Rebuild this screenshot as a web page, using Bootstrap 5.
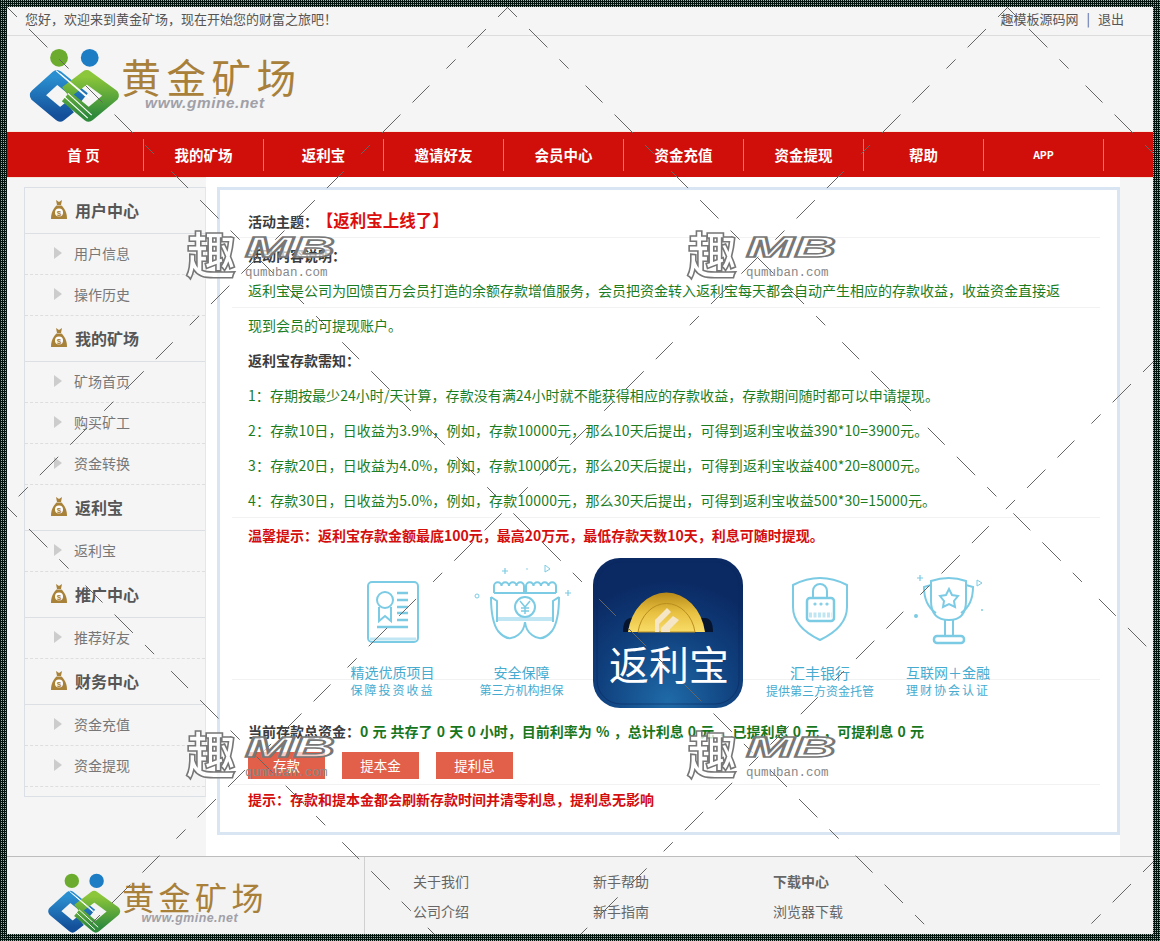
<!DOCTYPE html>
<html lang="zh-CN">
<head>
  <meta charset="UTF-8">
  <meta name="viewport" content="width=device-width, initial-scale=1">
  <title>黄金矿场</title>
  <link href="https://cdn.jsdelivr.net/npm/bootstrap@5.3.3/dist/css/bootstrap.min.css" rel="stylesheet">
  <style>
    body {
      margin: 0;
      font-family: "Noto Sans CJK SC", "Liberation Sans", sans-serif;
      font-size: 14px;
      background: #f5f5f5;
    }
    .frame {
      width: 1160px;
      height: 941px;
      padding: 7px;
      background: conic-gradient(#74c8a4 25%, #04140e 0) 0 0 / 2px 2px;
    }
    .frame-in {
      position: relative;
      height: 927px;
      overflow: hidden;
      background: #f5f5f5;
    }
    .overlay {
      position: absolute;
      left: 0;
      top: 0;
      pointer-events: none;
    }
    .top-bar {
      height: 29px;
      padding: 0 29px 0 18px;
      border-bottom: 1px solid #dcdcdc;
      font-size: 13px;
      line-height: 24px;
      color: #555;
    }
    .top-sep { margin: 0 8px; }
    .logo-area { height: 96px; padding: 1px 0 0 10px; }
    .main-nav {
      height: 45px;
      padding: 7px 0 6px 17px;
      background: #d00f0a;
      box-shadow: 0 -1px 0 #f8eadc, 0 1px 0 #f8e4d4;
    }
    .main-nav a {
      width: 120px;
      height: 32px;
      border-right: 1px solid #f0774a;
      color: #fff;
      font-weight: 700;
      font-size: 14.5px;
      line-height: 32px;
      text-align: center;
      text-decoration: none;
    }
    .main-nav a.small-txt { font-size: 10.5px; }
    .body-wrap { height: 679px; }
    .side-menu {
      width: 182px;
      height: 610px;
      margin: 10px 0 0 17px;
      border: 1px solid #dbdfe6;
      border-right-color: #e6e6e6;
      flex: none;
    }
    .side-head {
      height: 46px;
      padding: 0 0 2px 25px;
      border-bottom: 1px solid #dcdfe4;
      color: #565656;
      font-size: 16px;
      font-weight: 700;
      gap: 7px;
    }
    .side-item {
      height: 41px;
      padding: 0 0 2px 29px;
      border-bottom: 1px dashed #dedede;
      color: #777;
      font-size: 14px;
      gap: 12px;
    }
    .tri {
      width: 0;
      height: 0;
      border-left: 8px solid #ccc;
      border-top: 6px solid transparent;
      border-bottom: 6px solid transparent;
    }
    .main-col {
      width: 914px;
      flex: none;
      padding: 10px 0 21px 11px;
      background: #fff;
    }
    .act-panel {
      height: 648px;
      padding: 13px 17px 0 12px;
      border: 3px solid #d9e5f3;
      background: #fff;
    }
    .act-row {
      height: 35px;
      padding-left: 16px;
      line-height: 34px;
      white-space: nowrap;
    }
    .act-row.ruled { border-bottom: 1px solid #f2f2f2; }
    .act-row.wide-nums { letter-spacing: .17px; }
    .act-row.wide-first { letter-spacing: .05px; }
    .act-row.tip-last { line-height: 28px; }
    .lbl { color: #3c3c3c; font-weight: 700; }
    .colon-c { font-family: "Noto Sans CJK TC", sans-serif; }
    .grn { color: #1b7d1f; }
    .red-tip { color: #d40d0d; font-weight: 700; }
    .act-title { margin-left: 7px; color: #dc0f0f; font-size: 16.5px; font-weight: 700; }
    .grn-b { color: #18761c; font-weight: 700; word-spacing: 1px; }
    .promo {
      height: 161px;
      padding-left: 96px;
      background: linear-gradient(#f2f2f2, #f2f2f2) 0 126px / 100% 1px no-repeat;
    }
    .promo-col { padding-top: 12px; text-align: center; color: #47abd0; line-height: 17px; font-size: 14px; white-space: nowrap; }
    .promo-col svg { display: block; margin: 0 auto 19px; }
    .pc-a { width: 129px; }
    .pc-b { width: 129px; margin-right: 7px; }
    .pc-d { width: 154px; }
    .pc-e { width: 102px; }
    .app-icon { width: 150px; margin-top: 5px; flex: none; }
    .cap-sm { font-size: 12px; }
    .cap-lg { font-size: 15px; }
    .cap-spaced { font-size: 12px; letter-spacing: 2px; }
    .btn-row { height: 36px; padding: 3px 0 0 16px; gap: 17px; border-bottom: 1px solid #f2f2f2; }
    .btn-coral {
      width: 77px;
      height: 27px;
      padding: 0;
      border: 0;
      border-radius: 0;
      background: #e2604a;
      color: #fff;
      font-size: 13.5px;
      line-height: 27px;
    }
    .site-foot {
      height: 78px;
      border-top: 1px solid #bdbdbd;
      background: #f3f3f3;
    }
    .foot-logo { width: 358px; padding: 7px 0 0 32px; border-right: 1px solid #d0d0d0; flex: none; }
    .foot-links { padding: 13px 0 0 48px; }
    .foot-col { width: 180px; }
    .foot-col div { height: 30px; line-height: 22px; color: #666; font-size: 14px; }
  </style>
</head>
<body>

<svg width="0" height="0" class="position-absolute">
  <defs>
    <linearGradient id="blueG" x1="0" y1="0" x2="0" y2="1"><stop offset="0" stop-color="#2a8fd0"/><stop offset="1" stop-color="#14509a"/></linearGradient>
    <linearGradient id="greenG" x1="0" y1="0" x2="0" y2="1"><stop offset="0" stop-color="#8cc63a"/><stop offset="1" stop-color="#2f8a3c"/></linearGradient>
    <symbol id="gmineLogo" viewBox="0 0 280 96">
      <circle cx="41" cy="21" r="9" fill="#6bab2e"/>
      <circle cx="72" cy="21" r="9" fill="#1c7cc4"/>
      <path d="M66 62 39 40 18 59 42 79 52 71" fill="none" stroke="url(#blueG)" stroke-width="13" stroke-linejoin="round"/>
      <path d="M48 56 69 40 95 59 71 79 48 60" fill="none" stroke="url(#greenG)" stroke-width="13" stroke-linejoin="round"/>
      <path d="M42 37 72 62M38 34 68 60" stroke="#fff" stroke-width="1.2"/>
      <path d="M46 60 70 82M50 57 74 79" stroke="#fff" stroke-width="1.2"/>
      <text x="104" y="57" font-size="40" letter-spacing="5.500" fill="#a8803a" font-family="Noto Sans CJK SC, sans-serif">黄金矿场</text>
      <text x="128" y="72" font-size="15.500" font-weight="700" font-style="italic" letter-spacing=".6" fill="#a0a0a8" font-family="Liberation Sans, sans-serif">www.gmine.net</text>
    </symbol>
    <symbol id="moneyBag" viewBox="0 0 18 21">
      <path d="M6 1 9 3 12 1 11 6H7Z" fill="#a9823a"/>
      <path d="M6.500 6.500H11.500C15 10 17 14 17 20H1C1 14 3 10 6.500 6.500Z" fill="#a9823a"/>
      <circle cx="9" cy="13.500" r="4" fill="#fff"/>
      <text x="9" y="16.500" font-size="8" font-weight="700" text-anchor="middle" fill="#a9823a" font-family="Liberation Sans, sans-serif">$</text>
    </symbol>
    <g id="wmMark">
      <text x="0" y="42" font-size="50" font-weight="700" fill="#fff" fill-opacity=".75" stroke="#777" stroke-width="1.600" font-family="Noto Sans CJK SC, sans-serif">趣</text>
      <text x="59" y="25" font-size="30" font-weight="700" font-style="italic" fill="#fff" fill-opacity=".7" stroke="#777" stroke-width="1.600" textLength="90" lengthAdjust="spacingAndGlyphs" font-family="Liberation Sans, sans-serif">MB</text>
      <text x="59" y="44" font-size="12.500" fill="#888" font-family="Liberation Mono, monospace">qumuban.com</text>
    </g>
  </defs>
</svg>

<div class="frame">
  <div class="frame-in d-flex flex-column">

    <div class="top-bar d-flex justify-content-between">
      <span>您好，欢迎来到黄金矿场，现在开始您的财富之旅吧！</span>
      <span>趣模板源码网<span class="top-sep">|</span>退出</span>
    </div>

    <div class="logo-area">
      <svg width="280" height="95"><use href="#gmineLogo"/></svg>
    </div>

    <nav class="main-nav d-flex">
      <a href="#">首 页</a>
      <a href="#">我的矿场</a>
      <a href="#">返利宝</a>
      <a href="#">邀请好友</a>
      <a href="#">会员中心</a>
      <a href="#">资金充值</a>
      <a href="#">资金提现</a>
      <a href="#">帮助</a>
      <a href="#" class="small-txt">APP</a>
    </nav>

    <div class="body-wrap d-flex">
      <aside class="side-menu">
        <div class="side-head d-flex align-items-center"><svg width="18" height="21"><use href="#moneyBag"/></svg>用户中心</div>
        <div class="side-item d-flex align-items-center"><i class="tri"></i>用户信息</div>
        <div class="side-item d-flex align-items-center"><i class="tri"></i>操作历史</div>
        <div class="side-head d-flex align-items-center"><svg width="18" height="21"><use href="#moneyBag"/></svg>我的矿场</div>
        <div class="side-item d-flex align-items-center"><i class="tri"></i>矿场首页</div>
        <div class="side-item d-flex align-items-center"><i class="tri"></i>购买矿工</div>
        <div class="side-item d-flex align-items-center"><i class="tri"></i>资金转换</div>
        <div class="side-head d-flex align-items-center"><svg width="18" height="21"><use href="#moneyBag"/></svg>返利宝</div>
        <div class="side-item d-flex align-items-center"><i class="tri"></i>返利宝</div>
        <div class="side-head d-flex align-items-center"><svg width="18" height="21"><use href="#moneyBag"/></svg>推广中心</div>
        <div class="side-item d-flex align-items-center"><i class="tri"></i>推荐好友</div>
        <div class="side-head d-flex align-items-center"><svg width="18" height="21"><use href="#moneyBag"/></svg>财务中心</div>
        <div class="side-item d-flex align-items-center"><i class="tri"></i>资金充值</div>
        <div class="side-item d-flex align-items-center"><i class="tri"></i>资金提现</div>
      </aside>

      <main class="main-col">
        <div class="act-panel">
          <div class="act-row ruled"><span class="lbl">活动主题<span class="colon-c">：</span></span><span class="act-title">【返利宝上线了】</span></div>
          <div class="act-row"><span class="lbl">活动内容说明<span class="colon-c">：</span></span></div>
          <div class="act-row ruled grn">返利宝是公司为回馈百万会员打造的余额存款增值服务，会员把资金转入返利宝每天都会自动产生相应的存款收益，收益资金直接返</div>
          <div class="act-row grn">现到会员的可提现账户。</div>
          <div class="act-row"><span class="lbl">返利宝存款需知<span class="colon-c">：</span></span></div>
          <div class="act-row grn wide-first">1<span class="colon-c">：</span>存期按最少24小时/天计算，存款没有满24小时就不能获得相应的存款收益，存款期间随时都可以申请提现。</div>
          <div class="act-row grn wide-nums">2<span class="colon-c">：</span>存款10日，日收益为3.9%，例如，存款10000元，那么10天后提出，可得到返利宝收益390*10=3900元。</div>
          <div class="act-row grn wide-nums">3<span class="colon-c">：</span>存款20日，日收益为4.0%，例如，存款10000元，那么20天后提出，可得到返利宝收益400*20=8000元。</div>
          <div class="act-row ruled grn wide-nums">4<span class="colon-c">：</span>存款30日，日收益为5.0%，例如，存款10000元，那么30天后提出，可得到返利宝收益500*30=15000元。</div>
          <div class="act-row red-tip">温馨提示<span class="colon-c">：</span>返利宝存款金额最底100元，最高20万元，最低存款天数10天，利息可随时提现。</div>

          <div class="promo d-flex align-items-start">
            <div class="promo-col pc-a">
              <svg width="100" height="80" viewBox="0 0 100 80" fill="none" stroke="#7ccbe4" stroke-width="2">
                <rect x="25" y="17" width="50" height="60" rx="4"/>
                <path d="M27 74H73" stroke-width="3" stroke="#bfe6f2"/>
                <circle cx="42" cy="35" r="8"/>
                <path d="M36 42V56L42 51 48 56V42"/>
                <path d="M54 28H65M54 35H65M54 42H65M54 48H65M54 55H65M34 62H65" stroke-width="2.500"/>
              </svg>
              精选优质项目<br><span class="cap-spaced">保障投资收益</span>
            </div>
            <div class="promo-col pc-b">
              <svg width="100" height="80" viewBox="0 0 100 80" fill="none" stroke="#7ccbe4" stroke-width="2">
                <path d="M22 28V21a3.750 3.750 0 0 1 7.500 0a3.750 3.750 0 0 1 7.500 0a3.750 3.750 0 0 1 7.500 0a3.750 3.750 0 0 1 7.500 0V28"/>
                <path d="M54 28V21a3.750 3.750 0 0 1 7.500 0a3.750 3.750 0 0 1 7.500 0a3.750 3.750 0 0 1 7.500 0a3.750 3.750 0 0 1 7.500 0V28"/>
                <path d="M22 28H84"/>
                <path d="M25 54H81" stroke-width="4" stroke="#bfe6f2"/>
                <circle cx="53" cy="42" r="10"/>
                <path d="M48 36 53 42 58 36M53 42V49M49 43H57M49 46H57" stroke-width="1.500"/>
                <path d="M19 32Q19 56 26 66 36 78 46 70 52 66 53 57 54 66 60 70 70 78 80 66 87 56 87 32"/>
                <path d="M19 32 25 36V57M87 32 81 36V57"/>
                <path d="M30 6H36M33 3V9M93 28H99M96 25V31" stroke-width="1.200"/>
                <path d="M73 0 78 4 73 7Z" stroke-width="1"/>
                <circle cx="5" cy="31" r="2" stroke-width="1"/>
                <circle cx="55" cy="4" r=".8" fill="#7ccbe4" stroke="none"/>
              </svg>
              安全保障<br><span class="cap-sm">第三方机构担保</span>
            </div>
            <svg class="app-icon" width="150" height="150" viewBox="0 0 150 150">
              <defs>
                <radialGradient id="appBg" cx=".5" cy=".95" r=".8"><stop offset="0" stop-color="#1f6aa8"/><stop offset=".6" stop-color="#0f3f7c"/><stop offset="1" stop-color="#0b2a64"/></radialGradient>
                <linearGradient id="coinG" x1="0" y1="0" x2="0" y2="1"><stop offset="0" stop-color="#b88a18"/><stop offset=".5" stop-color="#e8c040"/><stop offset="1" stop-color="#f8dc68"/></linearGradient>
              </defs>
              <rect width="150" height="150" rx="27" fill="url(#appBg)"/>
              <rect x="4" y="4" width="142" height="142" rx="24" fill="none" stroke="#0a2458" stroke-opacity=".5"/>
              <path d="M30 74Q30 60 38 60H112Q120 60 120 74Z" fill="#07142e"/>
              <path d="M35 74A39 47 0 0 1 112 74Z" fill="url(#coinG)"/>
              <path d="M45 74A29 35 0 0 1 102 74Z" fill="none" stroke="#b98d1e"/>
              <path d="M68 74V70L80 58 86 62 77 71V74ZM66 66 78 54 74 50 62 62 62 74H66Z" fill="#f5e6c8"/>
              <text x="76" y="122" font-size="40" text-anchor="middle" fill="#fff" font-family="Noto Sans CJK SC, sans-serif">返利宝</text>
            </svg>
            <div class="promo-col pc-d">
              <svg width="100" height="80" viewBox="0 0 100 80" fill="none" stroke="#7ccbe4" stroke-width="2">
                <path d="M23 20Q50 6 77 20V42Q77 62 50 75 23 62 23 42Z"/>
                <path d="M43 33V26A7 7 0 0 1 57 26V33"/>
                <rect x="37" y="33" width="27" height="23" rx="3" stroke-width="2.500"/>
                <path d="M39 50H62" stroke="#bfe6f2" stroke-width="5" stroke-dasharray="3 1.500"/>
                <circle cx="45" cy="39" r=".6" fill="#7ccbe4"/><circle cx="51" cy="39" r=".6" fill="#7ccbe4"/><circle cx="57" cy="39" r=".6" fill="#7ccbe4"/>
              </svg>
              <span class="cap-lg">汇丰银行</span><br><span class="cap-sm">提供第三方资金托管</span>
            </div>
            <div class="promo-col pc-e">
              <svg width="100" height="80" viewBox="0 0 100 80" fill="none" stroke="#7ccbe4" stroke-width="2">
                <path d="M33 16Q51 10 68 16V36Q68 55 51 55 33 55 33 36Z"/>
                <path d="M33 20 26 22Q26 40 38 48M68 20 75 22Q75 40 63 48"/>
                <path d="M51 24 54 30 60 31 56 36 57 42 51 39 45 42 46 36 42 31 48 30Z"/>
                <path d="M47 55V71M55 55V71"/>
                <rect x="36" y="71" width="30" height="7" rx="3" stroke-width="2.500"/>
                <path d="M19 13H25M22 10V16" stroke-width="1.200"/>
                <path d="M79 15 84 18 79 21Z" stroke-width="1"/>
                <circle cx="18" cy="51" r="2" fill="#7ccbe4" stroke="none"/>
                <circle cx="84" cy="45" r="1" fill="#7ccbe4" stroke="none"/>
              </svg>
              互联网＋金融<br><span class="cap-spaced">理财协会认证</span>
            </div>
          </div>

          <div class="act-row"><span class="lbl">当前存款总资金<span class="colon-c">：</span></span><span class="grn-b">0 元 共存了 0 天 0 小时，目前利率为 % ，总计利息 0 元 ，已提利息 0 元 ，可提利息 0 元</span></div>
          <div class="btn-row d-flex">
            <button class="btn btn-coral">存款</button>
            <button class="btn btn-coral">提本金</button>
            <button class="btn btn-coral">提利息</button>
          </div>
          <div class="act-row tip-last red-tip">提示<span class="colon-c">：</span>存款和提本金都会刷新存款时间并清零利息，提利息无影响</div>
        </div>
      </main>
    </div>

    <footer class="site-foot d-flex">
      <div class="foot-logo">
        <svg width="224" height="69" viewBox="0 0 280 86"><use href="#gmineLogo" width="280" height="96"/></svg>
      </div>
      <div class="foot-links d-flex">
        <div class="foot-col"><div>关于我们</div><div>公司介绍</div></div>
        <div class="foot-col"><div>新手帮助</div><div>新手指南</div></div>
        <div class="foot-col"><div class="fw-bold">下载中心</div><div>浏览器下载</div></div>
      </div>
    </footer>

    <!-- watermark sheet laid over the whole page -->
    <svg class="overlay" width="1146" height="927" viewBox="7 7 1146 927">
      <g stroke="#666" stroke-width="1" stroke-dasharray="24 17 26 17 13 24" fill="none">
        <path d="M0 0 941 941M500 0 1441 941M1000 0 1941 941M0 500 441 941"/>
        <path d="M15 0 0 15M515 0 0 515M1015 0 74 941M1160 355 574 941M1160 855 1074 941"/>
      </g>
      <use href="#wmMark" x="186" y="232"/>
      <use href="#wmMark" x="687" y="232"/>
      <use href="#wmMark" x="186" y="732"/>
      <use href="#wmMark" x="687" y="732"/>
    </svg>
  </div>
</div>

<script src="https://cdn.jsdelivr.net/npm/bootstrap@5.3.3/dist/js/bootstrap.bundle.min.js"></script>
</body>
</html>
